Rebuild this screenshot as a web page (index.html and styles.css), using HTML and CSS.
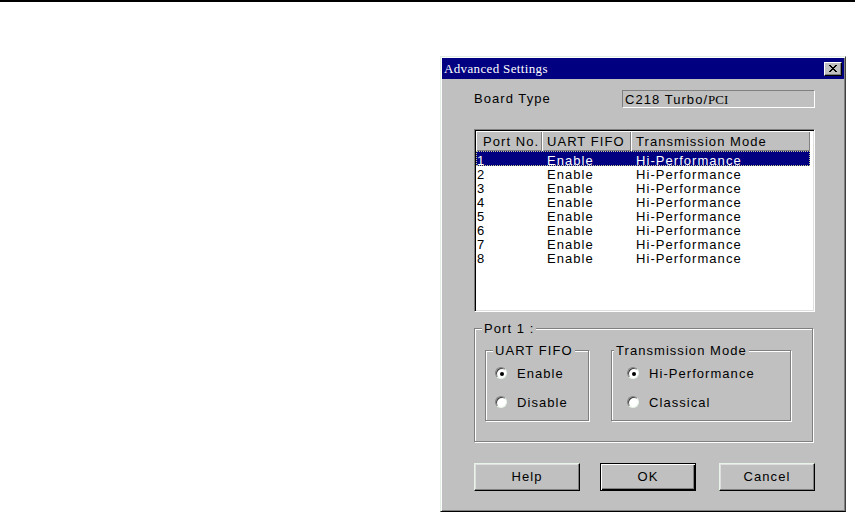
FILE: index.html
```html
<!DOCTYPE html>
<html>
<head>
<meta charset="utf-8">
<title>Advanced Settings</title>
<link rel="stylesheet" href="styles.css">
</head>
<body>
<div class="page">
  <div class="dialog">
    <div class="titlebar">
      <span class="title">Advanced Settings</span>
      <span class="close"><svg width="10" height="9" viewBox="0 0 10 9"><path d="M1 1 L8 8 M2 1 L9 8 M8 1 L1 8 M9 1 L2 8" stroke="#000" stroke-width="1" fill="none"/></svg></span>
    </div>
    <div class="content">
      <div class="board-row">
        <span class="label">Board Type</span>
        <div class="field">C218 Turbo/<span class="serif">PCI</span></div>
      </div>
      <div class="list">
        <div class="list-head">
          <div class="hcell first">Port No.</div>
          <div class="hcell">UART FIFO</div>
          <div class="hcell">Transmission Mode</div>
        </div>
        <div class="row selected"><span class="c1">1</span><span class="c2">Enable</span><span class="c3">Hi-Performance</span></div>
        <div class="row"><span class="c1">2</span><span class="c2">Enable</span><span class="c3">Hi-Performance</span></div>
        <div class="row"><span class="c1">3</span><span class="c2">Enable</span><span class="c3">Hi-Performance</span></div>
        <div class="row"><span class="c1">4</span><span class="c2">Enable</span><span class="c3">Hi-Performance</span></div>
        <div class="row"><span class="c1">5</span><span class="c2">Enable</span><span class="c3">Hi-Performance</span></div>
        <div class="row"><span class="c1">6</span><span class="c2">Enable</span><span class="c3">Hi-Performance</span></div>
        <div class="row"><span class="c1">7</span><span class="c2">Enable</span><span class="c3">Hi-Performance</span></div>
        <div class="row"><span class="c1">8</span><span class="c2">Enable</span><span class="c3">Hi-Performance</span></div>
      </div>
      <div class="group outer">
        <div class="group-title port-title"><span>Port 1 :</span></div>
        <div class="group-row">
          <div class="group uart">
            <div class="group-title uart-title"><span>UART FIFO</span></div>
            <div class="opt first-opt"><span class="radio"><span class="dot"></span></span><span>Enable</span></div>
            <div class="opt"><span class="radio"></span><span>Disable</span></div>
          </div>
          <div class="group trans">
            <div class="group-title trans-title"><span>Transmission Mode</span></div>
            <div class="opt first-opt"><span class="radio"><span class="dot"></span></span><span>Hi-Performance</span></div>
            <div class="opt"><span class="radio"></span><span>Classical</span></div>
          </div>
        </div>
      </div>
      <div class="buttons">
        <div class="btn help">Help</div>
        <div class="btn ok default">OK</div>
        <div class="btn cancel">Cancel</div>
      </div>
    </div>
  </div>
</div>
</body>
</html>
```
FILE: styles.css
```css
html, body {
  margin: 0;
  padding: 0;
  background: #fff;
}
.page {
  width: 855px;
  height: 512px;
  border-top: 2px solid #000;
  padding: 54px 0 0 440px;
  box-sizing: border-box;
  font-family: "Liberation Sans", Arial, sans-serif;
  font-size: 13px;
  letter-spacing: 1.05px;
  color: #000;
}
.dialog {
  width: 406px;
  height: 456px;
  box-sizing: border-box;
  background: #c0c0c0;
  border: 1px solid;
  border-color: #e4efe4 #404040 #000 #e4efe4;
  box-shadow: inset 1px 1px #fff, inset -1px -1px #808080;
  padding: 1px;
  display: flex;
  flex-direction: column;
}
.titlebar {
  height: 21px;
  background: #000080;
  display: flex;
  align-items: center;
  padding-left: 2px;
  padding-right: 2px;
}
.title {
  font-family: "Liberation Serif", "Times New Roman", serif;
  font-size: 13px;
  letter-spacing: 0.35px;
  color: #fff;
  line-height: 21px;
  flex: 1;
}
.close {
  width: 18px;
  height: 14px;
  box-sizing: border-box;
  background: #c0c0c0;
  border: 1px solid;
  border-color: #fff #000 #000 #fff;
  box-shadow: inset -1px -1px #808080;
  display: flex;
  align-items: center;
  justify-content: center;
}
.close svg { display: block; margin-left: -1px; }
.content {
  padding: 0 29px 0 32px;
  display: flex;
  flex-direction: column;
}
.board-row {
  margin-top: 11px;
  height: 18px;
  display: flex;
  align-items: center;
}
.label {
  line-height: 18px;
}
.field {
  margin-left: auto;
  width: 193px;
  height: 18px;
  box-sizing: border-box;
  border: 1px solid;
  border-color: #808080 #fff #fff #808080;
  padding-left: 2px;
  line-height: 17px;
  white-space: nowrap;
}
.serif {
  font-family: "Liberation Serif", "Times New Roman", serif;
  letter-spacing: 0;
}
.list {
  margin-top: 21px;
  height: 183px;
  box-sizing: border-box;
  background: #fff;
  border: 1px solid;
  border-color: #808080 #fff #fff #808080;
  box-shadow: inset 1px 1px #000, inset -1px -1px #dfdfdf;
  padding: 1px;
}
.list-head {
  display: grid;
  grid-template-columns: 66px 89px 179px;
  height: 20px;
}
.hcell {
  background: #c0c0c0;
  box-shadow: inset 1px 1px #fff, inset -1px -1px #808080;
  line-height: 19px;
  padding-top: 1px;
  padding-left: 5px;
  white-space: nowrap;
  overflow: hidden;
}
.hcell.first { padding-left: 7px; }
.row {
  display: grid;
  grid-template-columns: 66px 89px 179px;
  width: 334px;
  height: 14px;
  line-height: 18px;
  white-space: nowrap;
}
.row.selected {
  height: 15px;
  line-height: 20px;
  background: #000080;
  color: #fff;
  outline: 1px dotted #c8c890;
  outline-offset: -1px;
}
.c1 { padding-left: 1px; }
.c2, .c3 { padding-left: 5px; }

.group {
  border: 1px solid #808080;
  box-shadow: inset 1px 1px #fff, 1px 1px #fff;
  box-sizing: border-box;
}
.outer {
  margin-top: 16px;
  width: 339px;
  height: 114px;
  padding: 0 10px;
}
.group-title {
  height: 14px;
  margin-top: -7px;
  line-height: 14px;
  white-space: nowrap;
}
.group-title span {
  background: #c0c0c0;
  padding: 0 2px;
}
.port-title { margin-left: -3px; }
.uart-title { margin-left: 7px; }
.trans-title { margin-left: 2px; }
.group-row {
  display: flex;
  gap: 22px;
  margin-top: 14px;
}
.uart {
  width: 104px;
  height: 71px;
}
.trans {
  width: 180px;
  height: 71px;
}
.opt {
  display: flex;
  align-items: center;
  gap: 10px;
  height: 16px;
  margin-top: 13px;
}
.uart .opt { padding-left: 9px; }
.trans .opt { padding-left: 15px; }
.opt.first-opt { margin-top: 7px; }
.radio {
  width: 12px;
  height: 12px;
  border-radius: 50%;
  background: #fff;
  box-sizing: border-box;
  border: 1px solid;
  border-color: #808080 #e8f4e8 #e8f4e8 #808080;
  box-shadow: inset 1px 1px #404040;
  display: flex;
  align-items: center;
  justify-content: center;
  flex: none;
}
.dot {
  width: 4px;
  height: 4px;
  border-radius: 50%;
  background: #000;
  margin: 1px 0 0 1px;
}
.buttons {
  display: flex;
  margin-top: 21px;
}
.btn {
  height: 28px;
  box-sizing: border-box;
  background: #c0c0c0;
  border: 1px solid;
  border-color: #e8f4e8 #000 #000 #e8f4e8;
  box-shadow: inset -1px -1px #808080, inset 1px 1px #dfdfdf;
  display: flex;
  align-items: center;
  justify-content: center;
  line-height: 16px;
}
.btn.help { width: 106px; }
.btn.ok { width: 96px; margin-left: 20px; }
.btn.cancel { width: 96px; margin-left: 23px; }
.btn.default {
  border: 1px solid #000;
  box-shadow: inset 1px 1px #fff, inset -1px -1px #000, inset -2px -2px #808080;
}
```
